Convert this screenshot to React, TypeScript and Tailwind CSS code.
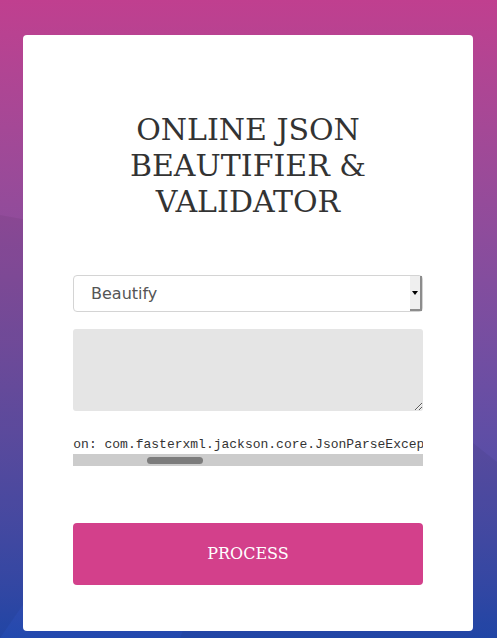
import React, { useEffect, useRef } from 'react';

const errorText =
    'Unable to parse the given input. Cause: java.lang.RuntimeException: com.fasterxml.jackson.core.JsonParseException: Unexpected end-of-input: expected close marker for OBJECT (start marker at [Source: (String)"{"; line: 1, column: 1]) at [Source: (String)"{"; line: 1, column: 3]';

export default function App() {
    const preRef = useRef<HTMLPreElement>(null);
    const prefixRef = useRef<HTMLSpanElement>(null);

    // Scroll the error output so it starts mid-message, like the reference
    useEffect(() => {
        if (preRef.current && prefixRef.current) {
            preRef.current.scrollLeft = prefixRef.current.offsetWidth;
        }
    }, []);

    const cut = errorText.indexOf('on: com.fasterxml');

    return (
        <div className="relative min-h-screen overflow-hidden bg-gradient-to-b from-[#c03f8f] to-[#2249ae]">
            {/* Low-poly background shading */}
            <svg className="absolute inset-0 h-full w-full" viewBox="0 0 497 638" preserveAspectRatio="none">
                <polygon points="0,215 260,262 0,638" fill="#000" fillOpacity="0.05" />
                <polygon points="300,330 473,443 497,462 497,638 180,638" fill="#000" fillOpacity="0.05" />
            </svg>

            <div className="relative ml-[23px] mr-[24px] pt-[35px] pb-[7px]">
                <div className="rounded-[4px] bg-white px-[50px] pt-[77px] pb-[46px]">
                    <h1 className="text-center text-[30px] leading-[36px] font-normal text-[#333] font-['DejaVu_Serif',serif]">
                        ONLINE JSON
                        <br />
                        BEAUTIFIER &amp;
                        <br />
                        VALIDATOR
                    </h1>

                    {/* Mode select */}
                    <div className="mt-[55px] flex h-[37px] items-stretch rounded-[4px] border border-[#d4d4d4] bg-white">
                        <div className="flex flex-1 items-center pl-[17px] text-[16px] text-[#555] font-['DejaVu_Sans',sans-serif]">
                            Beautify
                        </div>
                        <div className="flex w-[12px] items-center justify-center border-r-[2px] border-b-[2px] border-[#8c8c8c] bg-[#efefef]">
                            <span className="h-0 w-0 border-x-[3px] border-t-[4px] border-x-transparent border-t-black" />
                        </div>
                    </div>

                    <textarea className="mt-[17px] block h-[82px] w-full rounded-[3px] bg-[#e5e5e5] outline-none" />

                    {/* Error output, scrolled horizontally */}
                    <div className="mt-[24px]">
                        <pre
                            ref={preRef}
                            className="overflow-hidden whitespace-pre text-[13px] leading-[19px] text-[#333] font-['Liberation_Mono',monospace]"
                        >
                            <span ref={prefixRef}>{errorText.slice(0, cut)}</span>
                            {errorText.slice(cut)}
                        </pre>
                        <div className="flex h-[12px] items-center bg-[#cccccc] pl-[74px]">
                            <div className="h-[7px] w-[56px] rounded-full bg-[#7c7c7c]" />
                        </div>
                    </div>

                    <button
                        type="button"
                        className="mt-[57px] block h-[62px] w-full rounded-[4px] bg-[#d3408b] text-[16px] text-white font-['DejaVu_Serif',serif]"
                    >
                        PROCESS
                    </button>
                </div>
            </div>
        </div>
    );
}
